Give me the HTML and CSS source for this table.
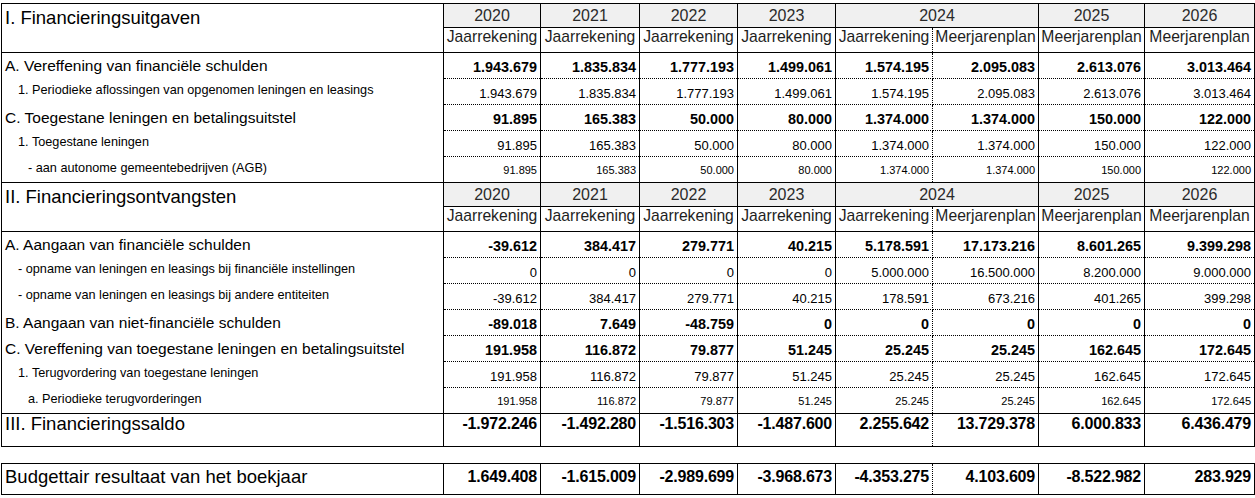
FILE: index.html
```html
<!DOCTYPE html>
<html lang="nl">
<head>
<meta charset="utf-8">
<title>Financieringsbudget</title>
<link rel="stylesheet" href="styles.css">
</head>
<body>
<div class="page">
<table class="fin">
  <colgroup>
    <col class="c-lbl"><col class="c-97"><col class="c-99"><col class="c-98"><col class="c-98"><col class="c-97"><col class="c-106"><col class="c-106"><col class="c-110">
  </colgroup>
  <tbody>
    <tr class="yr">
      <th class="title" rowspan="2">I. Financieringsuitgaven</th>
      <th>2020</th><th>2021</th><th>2022</th><th>2023</th><th colspan="2">2024</th><th>2025</th><th>2026</th>
    </tr>
    <tr class="type">
      <th>Jaarrekening</th><th>Jaarrekening</th><th>Jaarrekening</th><th>Jaarrekening</th><th class="j24">Jaarrekening</th><th class="m24">Meerjarenplan</th><th>Meerjarenplan</th><th>Meerjarenplan</th>
    </tr>
    <tr class="l1">
      <td class="lbl">A. Vereffening van financiële schulden</td>
      <td>1.943.679</td><td>1.835.834</td><td>1.777.193</td><td>1.499.061</td><td class="j24">1.574.195</td><td class="m24">2.095.083</td><td>2.613.076</td><td>3.013.464</td>
    </tr>
    <tr class="l2">
      <td class="lbl">1. Periodieke aflossingen van opgenomen leningen en leasings</td>
      <td>1.943.679</td><td>1.835.834</td><td>1.777.193</td><td>1.499.061</td><td class="j24">1.574.195</td><td class="m24">2.095.083</td><td>2.613.076</td><td>3.013.464</td>
    </tr>
    <tr class="l1">
      <td class="lbl">C. Toegestane leningen en betalingsuitstel</td>
      <td>91.895</td><td>165.383</td><td>50.000</td><td>80.000</td><td class="j24">1.374.000</td><td class="m24">1.374.000</td><td>150.000</td><td>122.000</td>
    </tr>
    <tr class="l2">
      <td class="lbl">1. Toegestane leningen</td>
      <td>91.895</td><td>165.383</td><td>50.000</td><td>80.000</td><td class="j24">1.374.000</td><td class="m24">1.374.000</td><td>150.000</td><td>122.000</td>
    </tr>
    <tr class="l3 last">
      <td class="lbl">- aan autonome gemeentebedrijven (AGB)</td>
      <td>91.895</td><td>165.383</td><td>50.000</td><td>80.000</td><td class="j24">1.374.000</td><td class="m24">1.374.000</td><td>150.000</td><td>122.000</td>
    </tr>

    <tr class="yr">
      <th class="title" rowspan="2">II. Financieringsontvangsten</th>
      <th>2020</th><th>2021</th><th>2022</th><th>2023</th><th colspan="2">2024</th><th>2025</th><th>2026</th>
    </tr>
    <tr class="type">
      <th>Jaarrekening</th><th>Jaarrekening</th><th>Jaarrekening</th><th>Jaarrekening</th><th class="j24">Jaarrekening</th><th class="m24">Meerjarenplan</th><th>Meerjarenplan</th><th>Meerjarenplan</th>
    </tr>
    <tr class="l1">
      <td class="lbl">A. Aangaan van financiële schulden</td>
      <td>-39.612</td><td>384.417</td><td>279.771</td><td>40.215</td><td class="j24">5.178.591</td><td class="m24">17.173.216</td><td>8.601.265</td><td>9.399.298</td>
    </tr>
    <tr class="l2">
      <td class="lbl">- opname van leningen en leasings bij financiële instellingen</td>
      <td>0</td><td>0</td><td>0</td><td>0</td><td class="j24">5.000.000</td><td class="m24">16.500.000</td><td>8.200.000</td><td>9.000.000</td>
    </tr>
    <tr class="l2">
      <td class="lbl">- opname van leningen en leasings bij andere entiteiten</td>
      <td>-39.612</td><td>384.417</td><td>279.771</td><td>40.215</td><td class="j24">178.591</td><td class="m24">673.216</td><td>401.265</td><td>399.298</td>
    </tr>
    <tr class="l1">
      <td class="lbl">B. Aangaan van niet-financiële schulden</td>
      <td>-89.018</td><td>7.649</td><td>-48.759</td><td>0</td><td class="j24">0</td><td class="m24">0</td><td>0</td><td>0</td>
    </tr>
    <tr class="l1">
      <td class="lbl">C. Vereffening van toegestane leningen en betalingsuitstel</td>
      <td>191.958</td><td>116.872</td><td>79.877</td><td>51.245</td><td class="j24">25.245</td><td class="m24">25.245</td><td>162.645</td><td>172.645</td>
    </tr>
    <tr class="l2">
      <td class="lbl">1. Terugvordering van toegestane leningen</td>
      <td>191.958</td><td>116.872</td><td>79.877</td><td>51.245</td><td class="j24">25.245</td><td class="m24">25.245</td><td>162.645</td><td>172.645</td>
    </tr>
    <tr class="l3 last">
      <td class="lbl">a. Periodieke terugvorderingen</td>
      <td>191.958</td><td>116.872</td><td>79.877</td><td>51.245</td><td class="j24">25.245</td><td class="m24">25.245</td><td>162.645</td><td>172.645</td>
    </tr>
    <tr class="total">
      <td class="lbl">III. Financieringssaldo</td>
      <td>-1.972.246</td><td>-1.492.280</td><td>-1.516.303</td><td>-1.487.600</td><td class="j24">2.255.642</td><td class="m24">13.729.378</td><td>6.000.833</td><td>6.436.479</td>
    </tr>
  </tbody>
</table>

<table class="fin result">
  <colgroup>
    <col class="c-lbl"><col class="c-97"><col class="c-99"><col class="c-98"><col class="c-98"><col class="c-97"><col class="c-106"><col class="c-106"><col class="c-110">
  </colgroup>
  <tbody>
    <tr class="total res">
      <td class="lbl">Budgettair resultaat van het boekjaar</td>
      <td>1.649.408</td><td>-1.615.009</td><td>-2.989.699</td><td>-3.968.673</td><td class="j24">-4.353.275</td><td class="m24">4.103.609</td><td>-8.522.982</td><td>283.929</td>
    </tr>
  </tbody>
</table>
</div>
</body>
</html>
```

FILE: styles.css
```css
html, body {
  margin: 0;
  padding: 0;
  background: #ffffff;
}

body {
  font-family: "Liberation Sans", Arial, sans-serif;
  color: #000;
}

.page {
  padding: 3px 0 0 1px;
}

.fin {
  border-collapse: collapse;
  table-layout: fixed;
  width: 1254px;
}

.result {
  margin-top: 16px;
}

.c-lbl { width: 442px; }
.c-97 { width: 97px; }
.c-98 { width: 98px; }
.c-99 { width: 99px; }
.c-106 { width: 106px; }
.c-110 { width: 110px; }

.fin th,
.fin td {
  box-sizing: border-box;
  border: 1px solid #000;
  padding: 0 3px;
  white-space: nowrap;
  overflow: hidden;
  font-weight: normal;
  line-height: 16px;
}

/* header rows */
.yr { height: 24px; }
.type { height: 25px; }

.yr th {
  background: #f0f0f0;
  color: #2a2a2a;
  font-size: 16px;
  line-height: 18px;
  text-align: center;
  vertical-align: top;
  padding: 3px 0 0;
}

.type th {
  background: #fff;
  color: #1e1e1e;
  font-size: 15.7px;
  line-height: 18px;
  text-align: center;
  vertical-align: top;
  padding: 0;
}

.yr th.title {
  background: #fff;
  color: #000;
  text-align: left;
  vertical-align: top;
  font-size: 18.5px;
  line-height: 20px;
  padding: 4px 3px 0 3px;
}

/* data rows */
.l1, .l2, .l3 { height: 26px; }

.l1 td, .l2 td, .l3 td {
  text-align: right;
  vertical-align: top;
  border-top-style: dotted;
  border-bottom-style: dotted;
}

.fin td.lbl {
  text-align: left;
  border-top: none;
  border-bottom: none;
}

.last td {
  border-bottom-style: solid;
}

.fin tr.last td.lbl {
  border-bottom: 1px solid #000;
}

.l1 td {
  font-size: 14.4px;
  font-weight: bold;
  padding-top: 6px;
}

.l1 td.lbl {
  font-size: 15.5px;
  font-weight: normal;
  line-height: 18px;
  padding: 4px 3px 0 3px;
}

.l2 td {
  font-size: 13px;
  padding-top: 7px;
}

.l2 td.lbl {
  font-size: 12.7px;
  padding: 3px 3px 0 16px;
}

.l3 td {
  font-size: 11px;
  padding-top: 5px;
}

.l3 td.lbl {
  font-size: 12.7px;
  padding: 3px 3px 0 26px;
}

/* totals */
.total { height: 33px; }

.total td {
  text-align: right;
  vertical-align: top;
  font-size: 16px;
  letter-spacing: -0.2px;
  line-height: 18px;
  font-weight: bold;
  padding: 1px 3px 0 3px;
}

.total td.lbl {
  font-size: 18.5px;
  letter-spacing: 0;
  line-height: 20px;
  font-weight: normal;
  text-align: left;
  border-top: 1px solid #000;
  border-bottom: 1px solid #000;
  padding: 0 3px;
}

.res { height: 31px; }

.res td {
  padding-top: 4px;
}

.res td.lbl {
  padding-top: 3px;
}

/* dotted split inside 2024 */
.fin .j24 {
  border-right: 1px dotted #000;
}

.fin .m24 {
  border-left: 1px dotted #000;
}
```
